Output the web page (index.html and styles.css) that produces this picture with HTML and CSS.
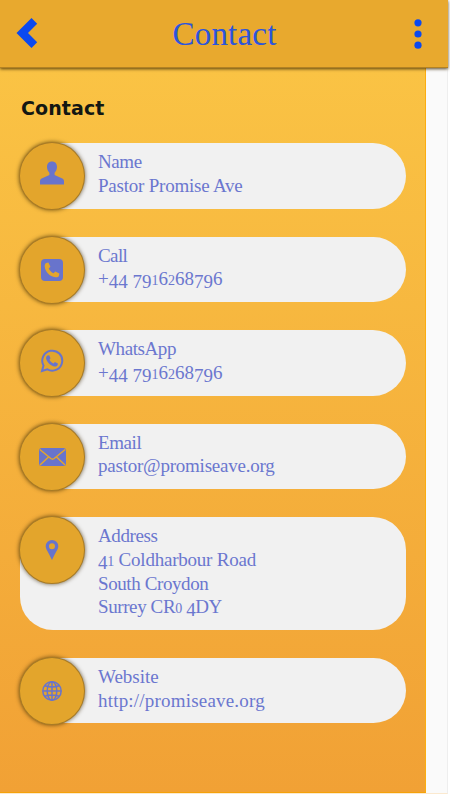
FILE: index.html
```html
<!DOCTYPE html>
<html lang="en">
<head>
<meta charset="utf-8">
<title>Contact</title>
<link rel="stylesheet" href="styles.css">
</head>
<body>
<div class="screen">
  <header class="bar">
    <svg class="back" width="22" height="32" viewBox="0 0 22 32"><path d="M15.5 1 21.2 6.7 12 16l9.2 9.2-5.7 5.8L.5 16Z"/></svg>
    <h1 class="title">Contact</h1>
    <svg class="more" width="8" height="30" viewBox="0 0 8 30"><circle cx="4" cy="3.8" r="3.6"/><circle cx="4" cy="15" r="3.6"/><circle cx="4" cy="26.2" r="3.6"/></svg>
  </header>
  <main class="content">
    <h2 class="heading">Contact</h2>
    <section class="card">
      <div class="disc person"><svg width="26" height="26" viewBox="0 0 26 26"><path d="M13 1.500c3.200 0 5 2.200 5 5.300 0 2.500-1 4.700-2.400 6v2.300l7.200 3.100c1.600.7 2.200 1.500 2.200 3.200v3H1v-3c0-1.700.6-2.500 2.200-3.200l7.200-3.100v-2.300C9 11.500 8 9.300 8 6.800c0-3.100 1.800-5.300 5-5.300Z"/></svg></div>
      <div class="info"><p class="snug">Name</p><p class="close">Pastor Promise Ave</p></div>
    </section>
    <section class="card">
      <div class="disc"><svg width="22" height="22" viewBox="0 0 22 22"><rect width="22" height="22" rx="4"/><path class="gold" d="M5.200 4 7.400 3.600 9.400 7.700 7.700 9.500c1 2.200 2.600 3.800 4.800 4.800l1.800-1.700 4.100 2-.4 2.200c-.5 1.300-2 1.700-3.600 1.500C8.600 17.600 4.200 13 3.700 7.600c-.1-1.600.3-3 1.500-3.600Z"/></svg></div>
      <div class="info"><p class="tight">Call</p><p>+<span class="low">44</span> <span class="low">79</span><span class="mid">1</span>6<span class="mid">2</span>68<span class="low">79</span>6</p></div>
    </section>
    <section class="card">
      <div class="disc lift"><svg width="24" height="24" viewBox="0 0 24 24"><path class="line" d="M2 22l1.500-5.500a10 10 0 1 1 3.900 3.900Z"/><path d="M7.400 6.500 9.200 6.200 10.500 9.300 9.500 10.800c.9 1.700 2.100 2.900 4 3.700l1.400-1.500 3 1.500c.2 1.900-1.200 3.100-3.200 3.100-4-.7-7.800-4.400-8.600-8.100-.1-1.100.4-2.300 1.300-3Z"/></svg></div>
      <div class="info"><p class="snug">WhatsApp</p><p>+<span class="low">44</span> <span class="low">79</span><span class="mid">1</span>6<span class="mid">2</span>68<span class="low">79</span>6</p></div>
    </section>
    <section class="card">
      <div class="disc"><svg width="27" height="18" viewBox="0 0 27 18"><rect width="27" height="18" rx="2.500"/><path class="cut" d="M.8 1.500 11.800 10.500q1.700 1.300 3.400 0L26.200 1.500M1 17l8.500-8M26 17l-8.500-8"/></svg></div>
      <div class="info"><p class="snug">Email</p><p class="close">pastor@promiseave.org</p></div>
    </section>
    <section class="card tall">
      <div class="disc"><svg width="14" height="20" viewBox="0 0 14 20"><path fill-rule="evenodd" d="M7 0a6.300 6.300 0 0 1 6.300 6.300c0 2.700-2.500 5.700-6.300 13.700C3.200 12 .7 9 .7 6.300A6.300 6.300 0 0 1 7 0Zm0 3.300a3 3 0 1 0 0 6 3 3 0 0 0 0-6Z"/></svg></div>
      <div class="info"><p class="snug">Address</p><p class="close"><span class="low">4</span><span class="mid">1</span> Coldharbour Road</p><p class="snug">South Croydon</p><p class="snug">Surrey CR<span class="mid">0</span> <span class="low">4</span>DY</p></div>
    </section>
    <section class="card">
      <div class="disc"><svg width="20" height="20" viewBox="0 0 20 20"><g class="globe"><circle cx="10" cy="10" r="9.200"/><ellipse cx="10" cy="10" rx="4.800" ry="9.200"/><path d="M10 1v18M1 10h18M2.800 4.800q7.200 2.400 14.400 0M2.800 15.200q7.200-2.400 14.400 0"/></g></svg></div>
      <div class="info"><p>Website</p><p class="wide">http://promiseave.org</p></div>
    </section>
  </main>
</div>
</body>
</html>
```
FILE: styles.css
```css
* { box-sizing: border-box; }
body { margin: 0; background: #fff; }
h1, h2, p { margin: 0; font-weight: normal; }
svg { display: block; flex: none; }

.screen {
  width: 448px;
  height: 794px;
  background: #fafafa;
  border-right: 1px solid #eee;
  border-bottom: 1px solid #fbe9cf;
}
.bar {
  position: relative;
  z-index: 1;
  display: flex;
  align-items: center;
  width: 448px;
  height: 68px;
  padding: 0 26px 0 16px;
  background: #e8a92e;
  border-bottom: 1px solid #b38223;
  box-shadow: 0 1px 3px rgba(60, 40, 0, .85);
}
.back, .more { fill: #0b49ef; }
.back { margin-top: -1px; }
.title {
  flex: 1;
  padding: 1px 3px 0 0;
  text-align: center;
  font: 33px/36px Georgia, "Liberation Serif", serif;
  letter-spacing: .2px;
  color: #2c55dc;
}
.content {
  display: flex;
  flex-direction: column;
  gap: 28px;
  width: 426px;
  height: 725px;
  padding: 28px 20px 0;
  background: linear-gradient(#fac344, #f1a135);
  border-right: 1px solid #fcad10;
  border-bottom: 1px solid #f5a20a;
}
.heading {
  height: 24px;
  margin: 0 0 -5px 1px;
  font: bold 19px/24px "DejaVu Sans", sans-serif;
  letter-spacing: .1px;
  color: #131713;
}
.card {
  display: flex;
  flex: none;
  width: 386px;
  height: 65.600px;
  background: #f1f1f1;
  border-radius: 33px;
}
.tall { height: 112.500px; }
.disc {
  display: flex;
  flex: none;
  align-items: center;
  justify-content: center;
  width: 66px;
  height: 68px;
  margin: -1px 0 0 -1px;
  border: 1px solid #a87b26;
  border-radius: 50%;
  background: #e3a52c;
  box-shadow: 0 0 4px rgba(60, 40, 0, .75);
  fill: #6874cc;
}
.person { padding-bottom: 7px; }
.lift { padding-bottom: 5px; }
.gold { fill: #e3a52c; }
.line { fill: none; stroke: #6874cc; stroke-width: 2; }
.cut { fill: none; stroke: #e3a52c; stroke-width: 1.500; }
.globe { fill: none; stroke: #6874cc; stroke-width: 1.500; }
.info {
  padding: 7px 0 0 13px;
  font: 19px/23.700px Georgia, "Liberation Serif", serif;
  color: #6b77cf;
  white-space: nowrap;
}
.info p { height: 23.700px; }
.close { letter-spacing: -.22px; }
.snug { letter-spacing: -.4px; }
.tight { letter-spacing: -.6px; }
.wide { letter-spacing: .2px; }

/* old-style numerals */
.low { line-height: 0; vertical-align: -3px; }
.mid { line-height: 0; font-size: 14px; }
```
